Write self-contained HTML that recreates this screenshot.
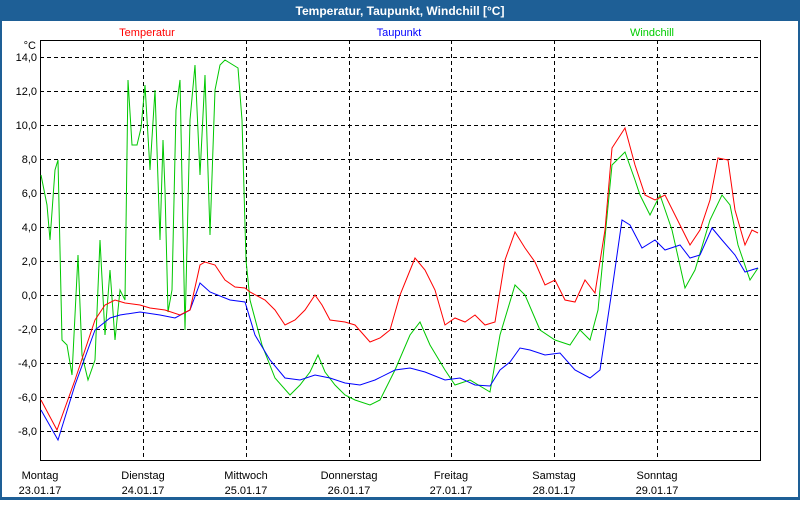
<!DOCTYPE html>
<html><head><meta charset="utf-8"><style>
body{margin:0;width:800px;height:500px;overflow:hidden;background:#fff;font-family:"Liberation Sans",sans-serif}
</style></head><body>
<svg width="800" height="500" xmlns="http://www.w3.org/2000/svg" font-family="Liberation Sans, sans-serif">
<rect x="0" y="0" width="800" height="500" fill="#1e5f96"/>
<rect x="2" y="21" width="796" height="476" fill="#fff"/>
<text x="400" y="15" fill="#fff" font-size="12" font-weight="bold" text-anchor="middle">Temperatur, Taupunkt, Windchill [°C]</text>
<text x="147" y="36" fill="#ff0000" font-size="11" text-anchor="middle">Temperatur</text>
<text x="399" y="36" fill="#0000ff" font-size="11" text-anchor="middle">Taupunkt</text>
<text x="652" y="36" fill="#00cc00" font-size="11" text-anchor="middle">Windchill</text>
<text x="36" y="49" font-size="11" text-anchor="end">°C</text>
<g stroke="#000" stroke-width="1" stroke-dasharray="4,3" shape-rendering="crispEdges">
<line x1="40" x2="760" y1="57.5" y2="57.5"/><line x1="40" x2="760" y1="91.5" y2="91.5"/>
<line x1="40" x2="760" y1="125.5" y2="125.5"/><line x1="40" x2="760" y1="159.5" y2="159.5"/>
<line x1="40" x2="760" y1="193.5" y2="193.5"/><line x1="40" x2="760" y1="227.5" y2="227.5"/>
<line x1="40" x2="760" y1="261.5" y2="261.5"/><line x1="40" x2="760" y1="295.5" y2="295.5"/>
<line x1="40" x2="760" y1="329.5" y2="329.5"/><line x1="40" x2="760" y1="363.5" y2="363.5"/>
<line x1="40" x2="760" y1="397.5" y2="397.5"/><line x1="40" x2="760" y1="431.5" y2="431.5"/>
<line y1="40" y2="460" x1="143.5" x2="143.5"/><line y1="40" y2="460" x1="246.5" x2="246.5"/>
<line y1="40" y2="460" x1="349.5" x2="349.5"/><line y1="40" y2="460" x1="451.5" x2="451.5"/>
<line y1="40" y2="460" x1="554.5" x2="554.5"/><line y1="40" y2="460" x1="657.5" x2="657.5"/>
</g>
<rect x="40.5" y="40.5" width="720" height="420" fill="none" stroke="#000" stroke-width="1" shape-rendering="crispEdges"/>
<g font-size="11" text-anchor="end">
<text x="37" y="61">14,0</text><text x="37" y="95">12,0</text><text x="37" y="129">10,0</text>
<text x="37" y="163">8,0</text><text x="37" y="197">6,0</text><text x="37" y="231">4,0</text>
<text x="37" y="265">2,0</text><text x="37" y="299">0,0</text><text x="37" y="333">-2,0</text>
<text x="37" y="367">-4,0</text><text x="37" y="401">-6,0</text><text x="37" y="435">-8,0</text>
</g>
<g font-size="11" text-anchor="middle">
<text x="40" y="479">Montag</text><text x="40" y="494">23.01.17</text>
<text x="143" y="479">Dienstag</text><text x="143" y="494">24.01.17</text>
<text x="246" y="479">Mittwoch</text><text x="246" y="494">25.01.17</text>
<text x="349" y="479">Donnerstag</text><text x="349" y="494">26.01.17</text>
<text x="451" y="479">Freitag</text><text x="451" y="494">27.01.17</text>
<text x="554" y="479">Samstag</text><text x="554" y="494">28.01.17</text>
<text x="657" y="479">Sonntag</text><text x="657" y="494">29.01.17</text>
</g>
<polyline fill="none" stroke="#00c800" stroke-width="1" points="41,175 47,205 50,240 55,170 58,160 62,340 67,345 72,375 78,255 82,355 88,380 95,360 100,240 105,335 110,270 115,340 120,290 125,300 128,80 132,145 137,145 141,128 145,85 150,170 155,90 160,240 163,140 165,190 168,312 172,290 176,110 180,80 185,330 190,120 195,65 200,175 205,75 210,235 215,90 220,65 225,60 238,68 242,120 246,260 250,300 262,345 275,378 290,395 300,385 310,372 318,355 325,372 335,385 345,395 355,400 370,405 380,400 395,370 410,335 420,322 430,345 445,370 455,385 470,380 490,392 500,335 515,285 525,295 540,330 555,340 570,345 580,330 590,340 598,310 612,165 625,152 635,180 640,195 650,215 660,195 672,230 685,288 695,270 710,220 722,195 730,205 738,245 750,280 758,268"/>
<polyline fill="none" stroke="#0000ff" stroke-width="1" points="41,410 58,440 75,385 95,330 110,318 120,315 140,312 160,315 175,318 190,310 200,283 210,292 230,300 245,302 255,335 270,360 285,378 300,380 315,375 330,378 345,383 360,385 375,380 395,370 410,368 425,372 445,380 460,378 475,385 490,386 500,370 510,362 520,348 530,350 545,355 560,353 575,370 590,378 600,370 612,290 622,220 630,225 642,248 655,240 665,250 680,245 690,258 700,255 712,228 722,240 735,255 745,272 758,268"/>
<polyline fill="none" stroke="#ff0000" stroke-width="1" points="41,400 57,430 75,380 95,320 105,305 115,300 125,303 140,305 150,308 165,310 180,315 190,310 200,265 205,262 215,265 225,280 235,287 245,288 250,292 265,300 275,310 285,325 295,320 305,310 315,295 322,305 330,320 345,322 355,325 370,342 380,338 390,330 400,295 415,258 425,270 435,290 445,325 455,318 465,322 475,315 485,325 495,322 505,260 515,232 525,248 535,262 545,285 555,280 565,300 575,302 585,280 595,293 605,230 612,148 625,128 635,165 645,195 655,200 665,195 680,225 690,245 700,230 710,200 718,158 728,160 735,210 745,245 752,230 758,233"/>
</svg>
</body></html>
